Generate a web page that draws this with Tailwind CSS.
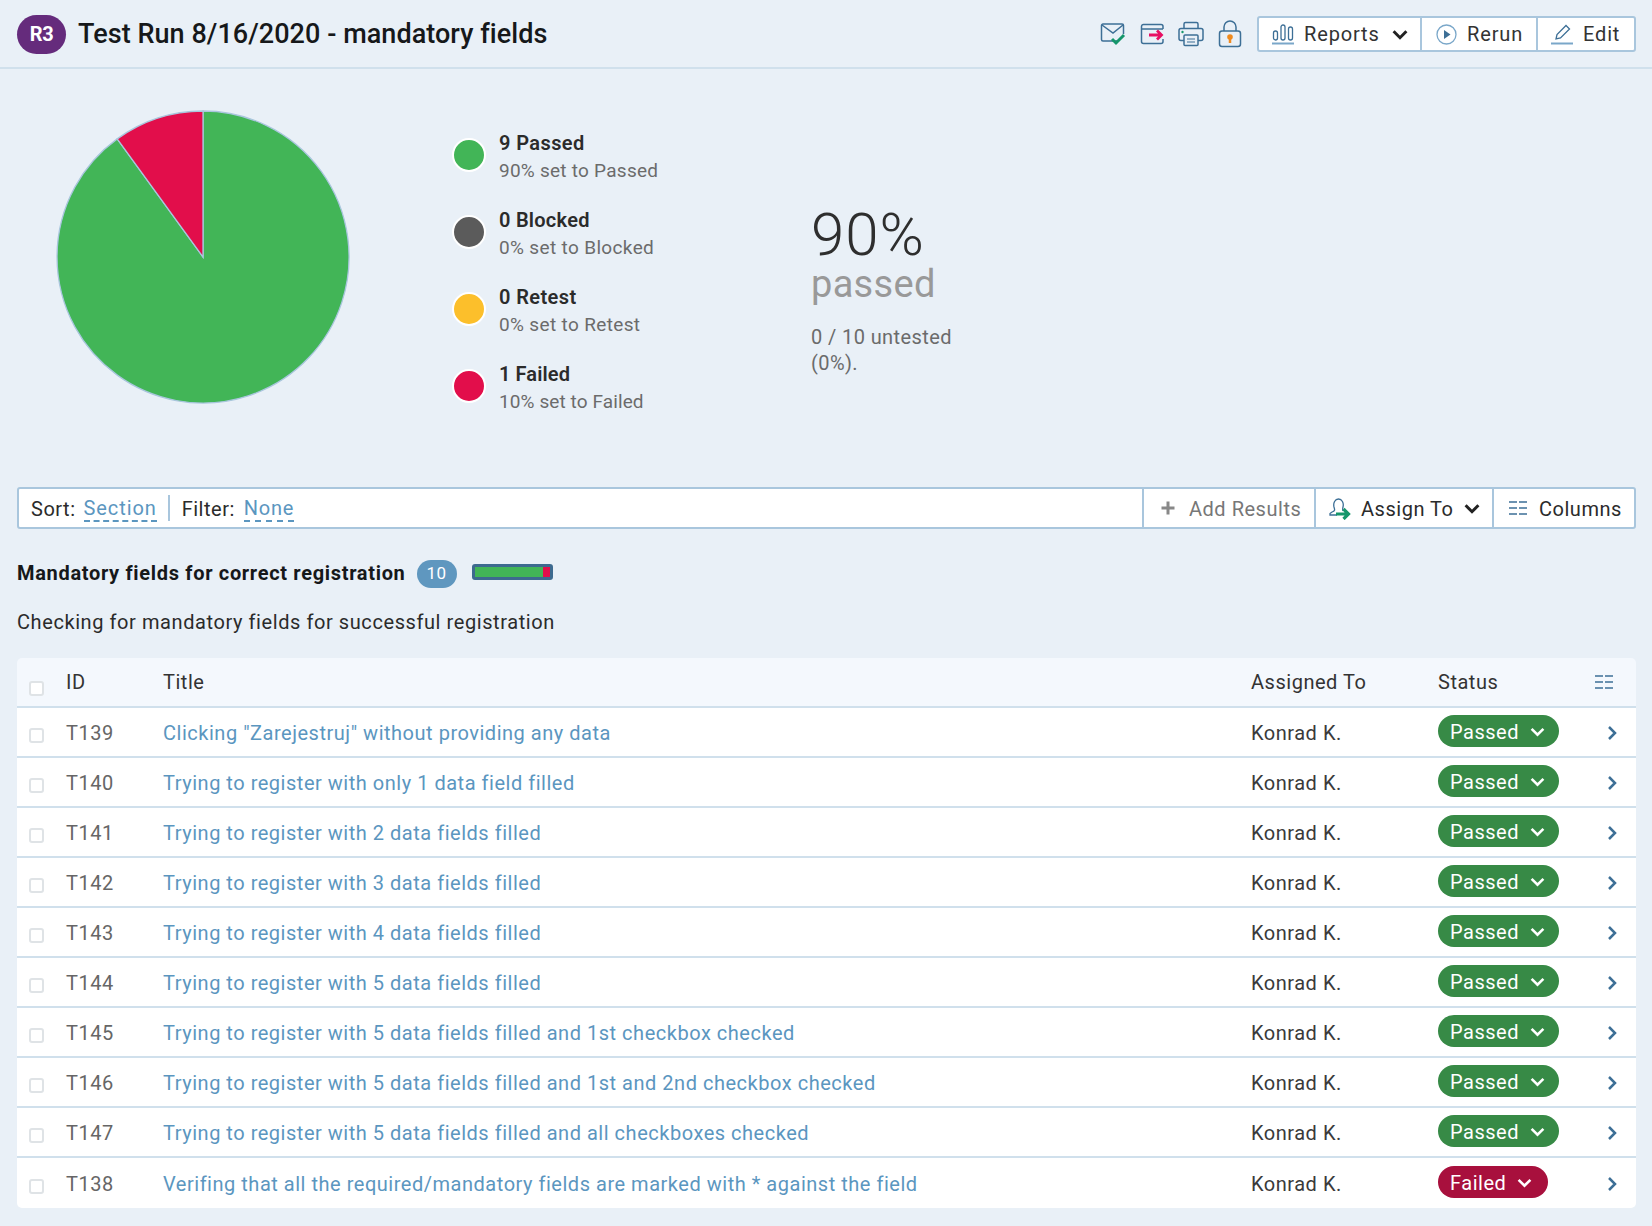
<!DOCTYPE html>
<html lang="en">
<head>
  <meta charset="UTF-8">
  <title>Test Run 8/16/2020 - mandatory fields</title>
  <script src="https://cdn.jsdelivr.net/npm/@tailwindcss/browser@4"></script>
</head>
<body class="bg-[#e9f0f7] text-[#2b2b2b] font-['Roboto',sans-serif] text-[20px] tracking-[0.52px] h-[1226px] overflow-hidden">

<!-- Header -->
<header class="h-[69px] border-b-2 border-[#d0e0ec] flex items-center pl-[17px] pr-[16px] pt-[1px]">
  <div class="w-[49px] h-[39px] rounded-[20px] bg-[#652b7c] text-white font-bold text-[20px] tracking-[-0.5px] flex items-center justify-center">R3</div>
  <h1 class="ml-[12px] text-[27px] font-medium text-[#16181a] tracking-[0.05px]">Test Run 8/16/2020 - mandatory fields</h1>

  <div class="ml-auto flex items-center">
    <svg class="w-[26px] h-[26px] mr-[13px]" viewBox="0 0 26 26" fill="none"><path d="M18 20H3a1.5 1.5 0 0 1-1.5-1.5v-14A1.5 1.5 0 0 1 3 3h19a1.5 1.5 0 0 1 1.500 1.500V13" stroke="#3d6f96" stroke-width="1.500"/><path d="M2 4l11 8 10-8" stroke="#3d6f96" stroke-width="1.500"/><path d="M12 18l4 4 8-8" stroke="#15966b" stroke-width="3"/></svg>
    <svg class="w-[26px] h-[26px] mr-[13px]" viewBox="0 0 26 26" fill="none"><path d="M24 8V5.500A2 2 0 0 0 22 3.500H4.500a2 2 0 0 0-2 2v15a2 2 0 0 0 2 2H22a2 2 0 0 0 2-2V18M2.500 8H24" stroke="#3d6f96" stroke-width="1.500"/><path d="M10 14h13M18 9.500l4.500 4.500-4.500 4.500" stroke="#e70f63" stroke-width="2.800"/></svg>
    <svg class="w-[26px] h-[26px] mr-[14px]" viewBox="0 0 26 26" fill="none"><rect x="6" y="1.500" width="14" height="7" rx="1.500" stroke="#3d6f96" stroke-width="1.500"/><rect x="1" y="7.500" width="24" height="12" rx="2" fill="#e9f0f7" stroke="#3d6f96" stroke-width="1.500"/><rect x="6" y="14" width="14" height="10.500" rx="1" fill="#e9f0f7" stroke="#3d6f96" stroke-width="1.500"/><path d="M9 18h8M9 21h8" stroke="#3d6f96" stroke-width="1.200"/><circle cx="4.500" cy="11" r="1.200" fill="#15966b"/></svg>
    <svg class="w-[24px] h-[28px] mr-[15px]" viewBox="0 0 24 28" fill="none"><path d="M6 11V7a6 6 0 0 1 12 0v4" stroke="#3d6f96" stroke-width="1.500"/><rect x="1.500" y="11" width="21" height="15.500" rx="2.500" stroke="#3d6f96" stroke-width="1.500"/><circle cx="12" cy="17" r="2.800" fill="#f08a1d"/><path d="M12 17v6" stroke="#f08a1d" stroke-width="2.500"/></svg>

    <div class="flex h-[36px] w-[379px] bg-white rounded-[3px] border-2 border-[#a9c6dd] text-[#333] tracking-[0.85px]">
      <div class="w-[161px] flex items-center pl-[13px]">
        <svg class="w-[22px] h-[22px]" viewBox="0 0 22 22" fill="none"><rect x="1.500" y="8" width="4" height="9" rx="2" stroke="#3d6f96" stroke-width="1.300"/><rect x="9" y="2" width="4" height="15" rx="2" stroke="#3d6f96" stroke-width="1.300"/><rect x="16.500" y="4" width="4" height="13" rx="2" stroke="#3d6f96" stroke-width="1.300"/><path d="M0 20.500h22" stroke="#7aa7c9" stroke-width="2"/></svg>
        <span class="ml-[10px]">Reports</span>
        <svg class="w-[16px] h-[11px] ml-[12px]" viewBox="0 0 15 10" fill="none"><path d="M1.500 2l6 6 6-6" stroke="#222" stroke-width="2.800"/></svg>
      </div>
      <div class="w-[116px] flex items-center pl-[14px] border-l-2 border-[#a9c6dd]">
        <svg class="w-[21px] h-[21px]" viewBox="0 0 21 21" fill="none"><circle cx="10.500" cy="10.500" r="9.500" stroke="#7aa7c9" stroke-width="1.300"/><path d="M8 6l6.500 4.500L8 15z" fill="#3d6f96"/></svg>
        <span class="ml-[10px]">Rerun</span>
      </div>
      <div class="flex-1 flex items-center pl-[13px] border-l-2 border-[#a9c6dd]">
        <svg class="w-[22px] h-[22px]" viewBox="0 0 22 22" fill="none"><path d="M5 16l1-4.500L15 2.500l3.500 3.500L9.500 15z" stroke="#3d6f96" stroke-width="1.300"/><path d="M0 20.500h22" stroke="#7aa7c9" stroke-width="2"/></svg>
        <span class="ml-[10px]">Edit</span>
      </div>
    </div>
  </div>
</header>

<!-- Summary -->
<section class="h-[418px] flex items-start">
  <svg class="ml-[56px] mt-[41px] w-[294px] h-[294px]" viewBox="0 0 294 294">
    <path d="M147 147 L147 1 A146 146 0 1 1 61.200 28.900 Z" fill="#42b557" stroke="#a9c6dd" stroke-width="1.300"/>
    <path d="M147 147 L61.200 28.900 A146 146 0 0 1 147 1 Z" fill="#e20e4b" stroke="#a9c6dd" stroke-width="1.300"/>
  </svg>

  <div class="ml-[102px] mt-[55px] flex flex-col">
    <div class="h-[77px] flex">
      <span class="mt-[14px] w-[34px] h-[34px] rounded-full bg-[#42b557] border-2 border-white"></span>
      <div class="ml-[13px] mt-[5px]">
        <div class="font-semibold leading-[28px] tracking-[0.4px] text-[#2b2b2b]">9 Passed</div>
        <div class="text-[19px] leading-[28px] tracking-[0.25px] text-[#6b6b6b]">90% set to Passed</div>
      </div>
    </div>
    <div class="h-[77px] flex">
      <span class="mt-[14px] w-[34px] h-[34px] rounded-full bg-[#5b5b5b] border-2 border-white"></span>
      <div class="ml-[13px] mt-[5px]">
        <div class="font-semibold leading-[28px] tracking-[0.25px] text-[#2b2b2b]">0 Blocked</div>
        <div class="text-[19px] leading-[28px] tracking-[0.35px] text-[#6b6b6b]">0% set to Blocked</div>
      </div>
    </div>
    <div class="h-[77px] flex">
      <span class="mt-[14px] w-[34px] h-[34px] rounded-full bg-[#fcbf2b] border-2 border-white"></span>
      <div class="ml-[13px] mt-[5px]">
        <div class="font-semibold leading-[28px] tracking-[0.4px] text-[#2b2b2b]">0 Retest</div>
        <div class="text-[19px] leading-[28px] tracking-[0.35px] text-[#6b6b6b]">0% set to Retest</div>
      </div>
    </div>
    <div class="h-[77px] flex">
      <span class="mt-[14px] w-[34px] h-[34px] rounded-full bg-[#e20e4b] border-2 border-white"></span>
      <div class="ml-[13px] mt-[5px]">
        <div class="font-semibold leading-[28px] tracking-[0.1px] text-[#2b2b2b]">1 Failed</div>
        <div class="text-[19px] leading-[28px] tracking-[0.1px] text-[#6b6b6b]">10% set to Failed</div>
      </div>
    </div>
  </div>

  <div class="absolute left-[811px] top-[204px] w-[150px]">
    <div class="text-[60px] leading-[62px] font-light tracking-[1px] text-[#2e2e2e]">90%</div>
    <div class="text-[38px] leading-[36px] tracking-[0.3px] text-[#999]">passed</div>
    <div class="mt-[22px] text-[20px] leading-[26px] tracking-[0.4px] text-[#6b6b6b]">0 / 10 untested (0%).</div>
  </div>
</section>

<!-- Toolbar -->
<div class="mx-[17px] h-[42px] w-[1619px] bg-white border-2 border-[#a9c6dd] rounded-[3px] flex items-center">
  <span class="ml-[12px] pt-[1px]">Sort:</span>
  <a class="ml-[8px] pt-[1px] text-[#5b96bf] border-b-2 border-dashed border-[#5b96bf] leading-[24px] tracking-[0.9px]">Section</a>
  <span class="ml-[11px] mr-[12px] w-[2px] h-[26px] bg-[#a9c6dd]"></span>
  <span class="pt-[1px]">Filter:</span>
  <a class="ml-[9px] pt-[1px] text-[#5b96bf] border-b-2 border-dashed border-[#5b96bf] leading-[24px] tracking-[0.7px]">None</a>

  <div class="ml-auto flex h-full">
    <div class="w-[172px] border-l-2 border-[#a9c6dd] flex items-center pl-[16px] text-[#777]">
      <svg class="w-[16px] h-[16px]" viewBox="0 0 16 16"><path d="M8 1.500v13M1.500 8h13" stroke="#888" stroke-width="3"/></svg>
      <span class="ml-[13px] pt-[1px]">Add Results</span>
    </div>
    <div class="w-[178px] border-l-2 border-[#a9c6dd] flex items-center pl-[12px]">
      <svg class="w-[24px] h-[24px]" viewBox="0 0 24 24" fill="none"><path d="M4 16c3-1 3-2 2-5-1-4 1-8 4.500-8s5.500 4 4.500 8c-.5 2-.5 3 0 4M4 16l-2 1.500v1.500h7" stroke="#3d6f96" stroke-width="1.300"/><path d="M8 18h12M15.500 13l5 5-5 5" stroke="#15966b" stroke-width="3.200"/></svg>
      <span class="ml-[9px] pt-[1px]">Assign To</span>
      <svg class="w-[16px] h-[11px] ml-[11px]" viewBox="0 0 15 10" fill="none"><path d="M1.500 2l6 6 6-6" stroke="#222" stroke-width="2.800"/></svg>
    </div>
    <div class="w-[142px] border-l-2 border-[#a9c6dd] flex items-center pl-[15px]">
      <svg class="w-[18px] h-[16px]" viewBox="0 0 18 16" fill="none"><path d="M0 2h8M0 8h8M0 14h8M10 2h8M10 8h8M10 14h8" stroke="#3d6f96" stroke-width="1.400"/></svg>
      <span class="ml-[12px] pt-[1px]">Columns</span>
    </div>
  </div>
</div>

<!-- Section heading -->
<div class="mx-[17px] mt-[29px] flex items-center h-[32px]">
  <h2 class="font-bold text-[20px] tracking-[0.68px] -mt-[2px] text-[#16181a]">Mandatory fields for correct registration</h2>
  <span class="ml-[11px] w-[40px] h-[28px] rounded-full bg-[#5f97bf] text-white text-[17px] flex items-center justify-center">10</span>
  <div class="ml-[15px] -mt-[5px] w-[81px] h-[16px] rounded-[3px] border-[3px] border-[#3d6a8f] flex overflow-hidden">
    <span class="flex-1 bg-[#42b557]"></span>
    <span class="w-[7px] bg-[#e20e4b]"></span>
  </div>
</div>
<p class="mx-[17px] mt-[20px] leading-[24px] tracking-[0.58px] text-[#2b2b2b]">Checking for mandatory fields for successful registration</p>

<!-- Tests table -->
<div id="tabla" class="mx-[17px] mt-[24px] w-[1619px] rounded-[5px] overflow-hidden">
  <div class="h-[50px] bg-[#f4f8fd] border-b-2 border-[#d0e0ec] grid grid-cols-[49px_97px_1088px_187px_1fr] items-center text-[#333]">
    <span class="ml-[12px] mt-[12px] w-[15px] h-[15px] rounded-[3px] bg-white border-2 border-[#dfe3e6] block"></span>
    <span>ID</span>
    <span>Title</span>
    <span>Assigned To</span>
    <div class="flex items-center justify-between">
      <span>Status</span>
      <svg class="w-[18px] h-[16px] mr-[23px]" viewBox="0 0 18 16" fill="none"><path d="M0 2h8M0 8h8M0 14h8M10 2h8M10 8h8M10 14h8" stroke="#3d6f96" stroke-width="1.400"/></svg>
    </div>
  </div>
</div>

<script>
  const tests = [
    ['T139', 'Clicking "Zarejestruj" without providing any data', 'Passed'],
    ['T140', 'Trying to register with only 1 data field filled', 'Passed'],
    ['T141', 'Trying to register with 2 data fields filled', 'Passed'],
    ['T142', 'Trying to register with 3 data fields filled', 'Passed'],
    ['T143', 'Trying to register with 4 data fields filled', 'Passed'],
    ['T144', 'Trying to register with 5 data fields filled', 'Passed'],
    ['T145', 'Trying to register with 5 data fields filled and 1st checkbox checked', 'Passed'],
    ['T146', 'Trying to register with 5 data fields filled and 1st and 2nd checkbox checked', 'Passed'],
    ['T147', 'Trying to register with 5 data fields filled and all checkboxes checked', 'Passed'],
    ['T138', 'Verifing that all the required/mandatory fields are marked with * against the field', 'Failed']
  ];

  const estilos = {
    Passed: 'bg-[#378a46] w-[121px]',
    Failed: 'bg-[#a8103d] w-[110px]'
  };

  let filas = '';
  tests.forEach((t, i) => {
    const borde = i < tests.length - 1 ? 'border-b-2 border-[#d0e0ec]' : '';
    filas += `
    <div class="h-[50px] bg-white ${borde} grid grid-cols-[49px_97px_1088px_187px_1fr] items-center">
      <span class="ml-[12px] mt-[7px] w-[15px] h-[15px] rounded-[3px] bg-white border-2 border-[#dfe3e6] block"></span>
      <span class="pt-[1px] text-[#666]">${t[0]}</span>
      <a class="pt-[1px] text-[#5b96bf]">${t[1]}</a>
      <span class="pt-[1px] text-[#3a3a3a]">Konrad K.</span>
      <div class="flex items-center justify-between -mt-[2px]">
        <span class="h-[32px] pt-[1px] rounded-full text-white flex items-center pl-[12px] ${estilos[t[2]]}">
          ${t[2]}
          <svg class="w-[15px] h-[10px] ml-[11px]" viewBox="0 0 14 9" fill="none"><path d="M1.500 1.500l5.500 5.500 5.500-5.500" stroke="#fff" stroke-width="2.400"/></svg>
        </span>
        <svg class="w-[10px] h-[16px] mr-[19px] mt-[3px]" viewBox="0 0 10 16" fill="none"><path d="M2 2l6 6-6 6" stroke="#3d6f96" stroke-width="2.500"/></svg>
      </div>
    </div>`;
  });
  document.getElementById('tabla').insertAdjacentHTML('beforeend', filas);
</script>

</body>
</html>
